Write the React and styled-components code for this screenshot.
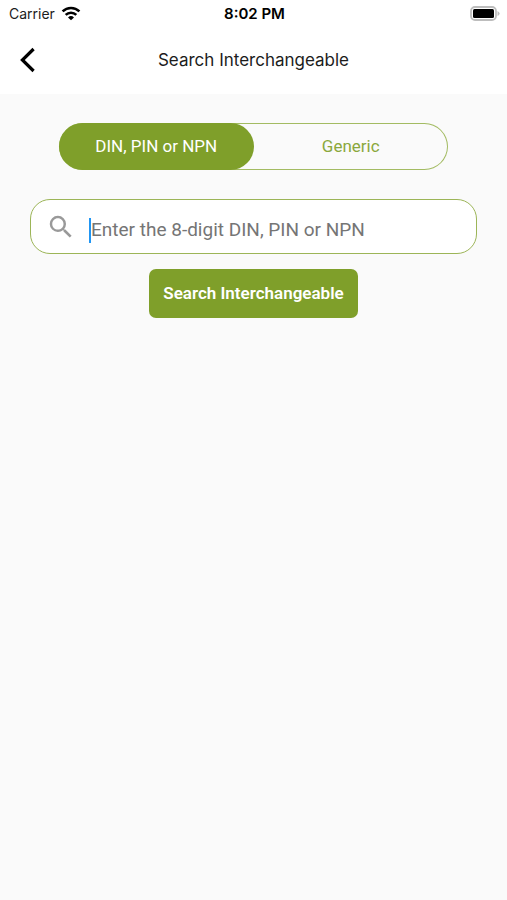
import React, { useState } from 'react';
import styled, { createGlobalStyle } from 'styled-components';
import { MdSearch } from 'react-icons/md';

function App() {
    const [mode, setMode] = useState('din');
    const [query, setQuery] = useState('');

    return <>
        <GlobalStyle />
        <Screen>
            <Header>
                <StatusBar>
                    <Carrier>
                        Carrier
                        <WifiIcon />
                    </Carrier>
                    <Clock>8:02 PM</Clock>
                    <BatteryIcon />
                </StatusBar>
                <NavBar>
                    <BackButton type="button" aria-label="Back">
                        <svg width="16" height="26" viewBox="0 0 16 26" fill="none" stroke="#000" strokeWidth="3.2">
                            <path d="M13.6 2 L2.4 13 L13.6 24" />
                        </svg>
                    </BackButton>
                    <Title>Search Interchangeable</Title>
                </NavBar>
            </Header>
            <Content>
                <Toggle>
                    <ToggleButton type="button" $active={mode === 'din'} aria-pressed={mode === 'din'} onClick={() => setMode('din')}>
                        DIN, PIN or NPN
                    </ToggleButton>
                    <ToggleButton type="button" $active={mode === 'generic'} aria-pressed={mode === 'generic'} onClick={() => setMode('generic')}>
                        Generic
                    </ToggleButton>
                </Toggle>
                <SearchBox>
                    <MdSearch size={30} color="#999" />
                    <Caret />
                    <SearchInput
                        type="text"
                        aria-label="DIN, PIN or NPN"
                        placeholder="Enter the 8-digit DIN, PIN or NPN"
                        value={query}
                        onChange={e => setQuery(e.target.value)}
                    />
                </SearchBox>
                <SubmitButton type="button">Search Interchangeable</SubmitButton>
            </Content>
        </Screen>
    </>;
}

export default App;

function WifiIcon() {
    return <svg width="20" height="15" viewBox="0 0 20 15" fill="none" stroke="#000" strokeWidth="2.6" aria-hidden="true">
        <path d="M1.6 5.4 A12 12 0 0 1 18.4 5.4" />
        <path d="M4.7 8.9 A7.6 7.6 0 0 1 15.3 8.9" />
        <path d="M10 14.2 L7 11.4 A4.3 4.3 0 0 1 13 11.4 Z" fill="#000" stroke="none" />
    </svg>;
}

function BatteryIcon() {
    return <svg width="31" height="15" viewBox="0 0 31 15" aria-hidden="true">
        <rect x="2" y="1" width="25" height="13" rx="4" fill="#fff" stroke="#bdbdbd" strokeWidth="1.8" />
        <rect x="4" y="3" width="21" height="9" rx="1.5" fill="#000" />
        <path d="M28.5 5 Q30.6 6 30.6 7.5 Q30.6 9 28.5 10 Z" fill="#bdbdbd" />
    </svg>;
}

const GlobalStyle = createGlobalStyle`
* {
    box-sizing: border-box;
}
body {
    margin: 0;
    background: #fafafa;
}
button, input {
    font-family: inherit;
}
`

const Screen = styled.div`
min-height: 100vh;
background: #fafafa;
font-family: Roboto, sans-serif;
`

const Header = styled.header`
background: #fff;
color: #1c1c1c;
font-family: Inter, sans-serif;
`

const StatusBar = styled.div`
display: grid;
grid-template-columns: 1fr auto 1fr;
align-items: center;
height: 26px;
padding: 0 7px 0 9px;
font-size: 14px;

>svg{
    justify-self: end;
}
`

const Carrier = styled.div`
display: flex;
align-items: center;
gap: 6px;
`

const Clock = styled.div`
color: #000;
font-size: 15px;
line-height: 26px;
padding-top: 1px;
font-weight: 600;
`

const NavBar = styled.div`
display: grid;
grid-template-columns: 40px 1fr 40px;
align-items: center;
height: 68px;
`

const BackButton = styled.button`
display: flex;
justify-content: flex-end;
padding: 0 4px 0 0;
border: none;
background: none;
cursor: pointer;
`

const Title = styled.h1`
margin: 0;
text-align: center;
font-size: 17px;
font-weight: 400;
`

const Content = styled.main`
display: flex;
flex-direction: column;
align-items: center;
padding: 29px 30px;
`

const Toggle = styled.div`
display: grid;
grid-template-columns: 1fr 1fr;
align-self: stretch;
height: 47px;
margin: 0 29px;
border-radius: 24px;
box-shadow: inset 0 0 0 1px #a3bb62;
`

const ToggleButton = styled.button`
padding: 0 0 2px;
border: none;
border-radius: 24px;
background: ${props => props.$active ? '#7f9f2a' : 'transparent'};
color: ${props => props.$active ? '#fff' : '#8aa83c'};
font-size: 17px;
cursor: pointer;
`

const SearchBox = styled.div`
display: flex;
align-items: center;
align-self: stretch;
height: 55px;
margin: 29px 0 15px;
padding: 0 15px;
border: 1px solid #9cb557;
border-radius: 20px;
background: #fff;
`

const Caret = styled.span`
width: 2px;
height: 25px;
margin: 8px 0 0 13px;
background: #2196f3;
`

const SearchInput = styled.input`
flex: 1;
min-width: 0;
padding: 6px 0 0;
border: none;
outline: none;
background: none;
color: #222;
caret-color: #2196f3;
font-size: 19px;

&::placeholder {
    color: #757575;
    opacity: 1;
}
`

const SubmitButton = styled.button`
height: 49px;
padding: 0 14px 2px;
border: none;
border-radius: 7px;
background: #7f9f2a;
color: #fff;
font-size: 17px;
font-weight: 600;
cursor: pointer;
`
